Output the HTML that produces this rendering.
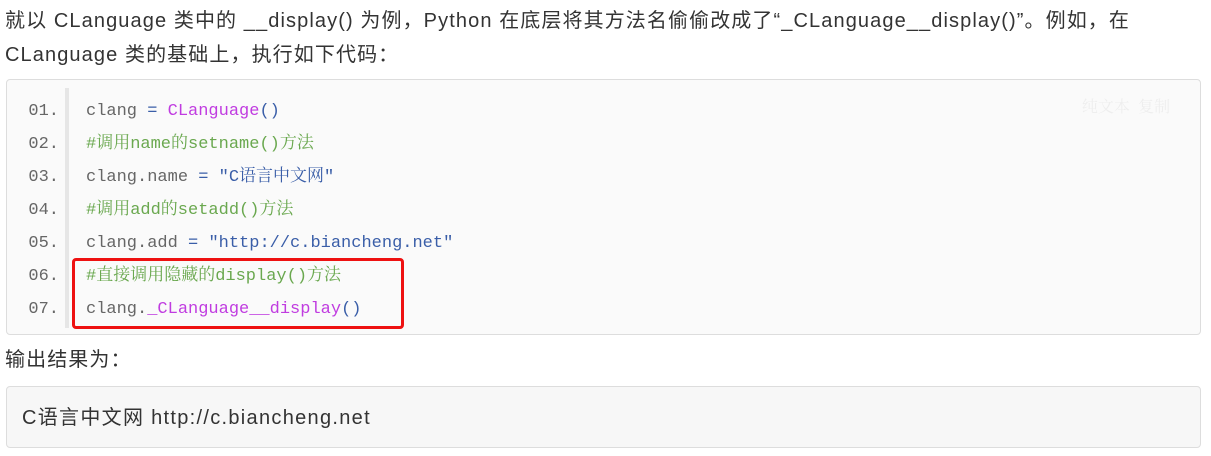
<!DOCTYPE html>
<html><head><meta charset="utf-8"><style>
body{margin:0;width:1211px;height:456px;background:#fff;font-family:"Liberation Sans","Noto Sans CJK SC",sans-serif;color:#333;overflow:hidden;position:relative}
.p{position:absolute;left:5px;font-size:20px;letter-spacing:1.1px;line-height:34px;height:34px;white-space:nowrap}
.code{position:absolute;left:6px;top:79px;width:1193px;height:254px;border:1px solid #ddd;border-radius:4px;background:#fafafa}
.gut{position:absolute;left:58px;top:8px;width:4px;height:240px;background:#e6e6e6}
.ln,.cl{position:absolute;height:33px;line-height:33px;font-family:"Liberation Mono","Noto Serif CJK SC",monospace;font-size:17px;color:#666;white-space:pre;overflow:hidden}
.ln{left:0;width:52px;text-align:right}
.cl{left:79px}
.cm{color:#6aa84f}.fn{color:#c03ce0}.st{color:#3a5ea8}.op{color:#3a5ea8}
.red{position:absolute;left:72px;top:258px;width:326px;height:65px;border:3px solid #ee1111;border-radius:4px}
.btns{position:absolute;right:6px;top:4px;width:136px;height:44px;background:#fafafa;color:#eee;font-family:"Noto Serif CJK SC",serif;font-size:16px;line-height:44px;text-align:center}
.out{position:absolute;left:6px;top:386px;height:62px;border:1px solid #ddd;border-radius:4px;background:#f7f7f7;font-size:20px;letter-spacing:1.3px;line-height:62px;padding-left:15px;box-sizing:border-box;width:1195px}
</style></head><body>
<div class="p" style="top:4px">就以 CLanguage 类中的 __display() 为例，Python 在底层将其方法名偷偷改成了“_CLanguage__display()”。例如，在</div>
<div class="p" style="top:38px">CLanguage 类的基础上，执行如下代码：</div>
<div class="code">
<div class="gut"></div>
<div class="btns">纯文本&nbsp;&nbsp;复制</div>
<div class="ln" style="top:15px">01.</div><div class="cl" style="top:15px">clang <span class="op">=</span> <span class="fn">CLanguage</span><span class="op">()</span></div>
<div class="ln" style="top:48px">02.</div><div class="cl cm" style="top:48px">#调用name的setname()方法</div>
<div class="ln" style="top:81px">03.</div><div class="cl" style="top:81px">clang.name <span class="op">=</span> <span class="st">"C语言中文网"</span></div>
<div class="ln" style="top:114px">04.</div><div class="cl cm" style="top:114px">#调用add的setadd()方法</div>
<div class="ln" style="top:147px">05.</div><div class="cl" style="top:147px">clang.add <span class="op">=</span> <span class="st">"http://c.biancheng.net"</span></div>
<div class="ln" style="top:180px">06.</div><div class="cl cm" style="top:180px">#直接调用隐藏的display()方法</div>
<div class="ln" style="top:213px">07.</div><div class="cl" style="top:213px">clang.<span class="fn">_CLanguage__display</span><span class="op">()</span></div>
</div>
<div class="red"></div>
<div class="p" style="top:343px">输出结果为：</div>
<div class="out">C语言中文网 http://c.biancheng.net</div>
</body></html>
